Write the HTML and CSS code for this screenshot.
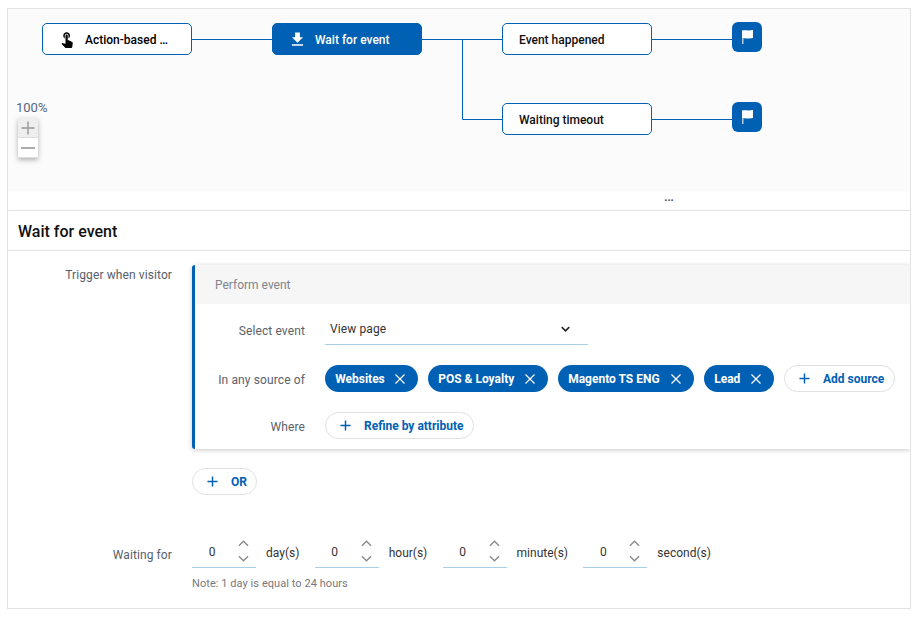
FILE: index.html
```html
<!DOCTYPE html>
<html lang="en">
<head>
  <meta charset="UTF-8" />
  <meta name="viewport" content="width=device-width, initial-scale=1.0"/>
  <title>Wait for event</title>
  <link rel="stylesheet" href="styles.css">
</head>
<body>

  <svg class="sprite" width="0" height="0">
    <symbol id="i-plus" viewBox="0 0 12 12"><path d="M6 0.5v11M0.5 6h11" fill="none" stroke="currentColor" stroke-width="1.6"/></symbol>
    <symbol id="i-close" viewBox="0 0 10 10"><path d="M0.5 0.5l9 9M9.5 0.5l-9 9" fill="none" stroke="currentColor" stroke-width="1.2"/></symbol>
    <symbol id="i-up" viewBox="0 0 12 7"><path d="M1 6l5-5 5 5" fill="none" stroke="currentColor" stroke-width="1.5"/></symbol>
    <symbol id="i-down" viewBox="0 0 12 7"><path d="M1 1l5 5 5-5" fill="none" stroke="currentColor" stroke-width="1.5"/></symbol>
    <symbol id="i-flag" viewBox="0 0 11 14"><path d="M0 0.500C3 -0.300 6 1 11 0v8C6 9 3 7.700 1.500 8.300V8H0z" fill="currentColor"/><rect y="8" width="1.500" height="6" fill="currentColor" opacity="0.7"/></symbol>
  </svg>

  <div class="frame">

    <!-- Flow canvas -->
    <div class="canvas">
      <svg class="edges" width="902" height="181">
        <path d="M184 30.500h80M414 30.500h80M454.500 30.500v80h40M644 30.500h80M644 110.500h80" fill="none" stroke="#0060b4"/>
      </svg>

      <div class="node node-action">
        <svg class="node-icon" viewBox="0 0 24 24"><path d="M9 11.240V7.500C9 6.120 10.120 5 11.500 5S14 6.120 14 7.500v3.740c1.210-.810 2-2.180 2-3.740C16 5.010 13.990 3 11.500 3S7 5.010 7 7.500c0 1.560.790 2.930 2 3.740zm9.840 4.630l-4.540-2.260c-.170-.070-.350-.110-.540-.110H13v-6c0-.830-.670-1.500-1.500-1.500S10 6.670 10 7.500v10.740l-3.430-.720c-.080-.010-.150-.030-.240-.030-.310 0-.590.130-.790.330l-.790.800 4.940 4.940c.270.270.650.440 1.060.440h6.790c.750 0 1.330-.550 1.440-1.280l.750-5.270c.010-.070.020-.140.020-.200 0-.620-.380-1.160-.910-1.380z" fill="currentColor"/></svg>
        <span>Action-based …</span>
      </div>

      <div class="node node-wait">
        <svg class="node-icon" viewBox="0 0 24 24"><path d="M19 9h-4V3H9v6H5l7 7 7-7zM5 18v2h14v-2H5z" fill="currentColor"/></svg>
        <span>Wait for event</span>
      </div>

      <div class="node node-happened"><span>Event happened</span></div>
      <div class="node node-timeout"><span>Waiting timeout</span></div>

      <div class="flag flag-top"><svg width="11" height="14"><use href="#i-flag"/></svg></div>
      <div class="flag flag-bottom"><svg width="11" height="14"><use href="#i-flag"/></svg></div>

      <div class="zoom-level">100%</div>
      <div class="zoom-box">
        <button class="zoom-btn zoom-in"><svg width="14" height="14"><use href="#i-plus"/></svg></button>
        <button class="zoom-btn"><svg class="minus" width="14" height="2"><rect width="14" height="2" fill="currentColor"/></svg></button>
      </div>
    </div>

    <div class="resizer">...</div>

    <h2 class="title">Wait for event</h2>

    <div class="content">
      <div class="row">
        <div class="row-label">Trigger when visitor</div>

        <div class="card">
          <div class="card-head">Perform event</div>
          <div class="card-body">
            <div class="field">
              <label>Select event</label>
              <div class="select">
                <span>View page</span>
                <svg width="9" height="6" viewBox="0 0 12 7"><path d="M1 1l5 5 5-5" fill="none" stroke="#222" stroke-width="2"/></svg>
              </div>
            </div>

            <div class="field">
              <label>In any source of</label>
              <div class="chips">
                <span class="chip chip-websites">Websites <svg width="10" height="10"><use href="#i-close"/></svg></span>
                <span class="chip chip-pos">POS &amp; Loyalty <svg width="10" height="10"><use href="#i-close"/></svg></span>
                <span class="chip chip-magento">Magento TS ENG <svg width="10" height="10"><use href="#i-close"/></svg></span>
                <span class="chip chip-lead">Lead <svg width="10" height="10"><use href="#i-close"/></svg></span>
                <button class="pill pill-add"><svg width="11" height="11"><use href="#i-plus"/></svg>Add source</button>
              </div>
            </div>

            <div class="field">
              <label>Where</label>
              <button class="pill pill-refine"><svg width="11" height="11"><use href="#i-plus"/></svg>Refine by attribute</button>
            </div>
          </div>
        </div>
      </div>

      <button class="pill pill-or"><svg width="11" height="11"><use href="#i-plus"/></svg>OR</button>

      <div class="row row-wait">
        <div class="row-label">Waiting for</div>
        <div>
          <div class="durations">
            <div class="number"><span class="number-value">0</span><span class="spin"><svg width="11" height="7"><use href="#i-up"/></svg><svg width="11" height="7"><use href="#i-down"/></svg></span></div>
            <span class="unit">day(s)</span>
            <div class="number"><span class="number-value">0</span><span class="spin"><svg width="11" height="7"><use href="#i-up"/></svg><svg width="11" height="7"><use href="#i-down"/></svg></span></div>
            <span class="unit">hour(s)</span>
            <div class="number"><span class="number-value">0</span><span class="spin"><svg width="11" height="7"><use href="#i-up"/></svg><svg width="11" height="7"><use href="#i-down"/></svg></span></div>
            <span class="unit">minute(s)</span>
            <div class="number"><span class="number-value">0</span><span class="spin"><svg width="11" height="7"><use href="#i-up"/></svg><svg width="11" height="7"><use href="#i-down"/></svg></span></div>
            <span class="unit">second(s)</span>
          </div>
          <p class="note">Note: 1 day is equal to 24 hours</p>
        </div>
      </div>
    </div>
  </div>

</body>
</html>
```

FILE: styles.css
```css
body {
  font-family: Roboto, 'Liberation Sans', sans-serif;
  font-size: 12px;
  color: #333;
  background: #fff;
  margin: 0;
  padding: 0;
}

button {
  font-family: inherit;
  cursor: pointer;
}

.sprite {
  position: absolute;
}

.frame {
  box-sizing: border-box;
  width: 904px;
  height: 601px;
  margin: 8px 0 0 7px;
  border: 1px solid #e3e3e3;
  overflow: hidden;
}

/* Flow canvas */
.canvas {
  position: relative;
  height: 181px;
  background-color: #fbfbfb;
}

.edges {
  position: absolute;
  left: 0;
  top: 0;
}

.node {
  position: absolute;
  box-sizing: border-box;
  display: flex;
  align-items: center;
  width: 150px;
  height: 32px;
  padding: 2px 0 0 16px;
  border: 1px solid #0060b4;
  border-radius: 5px;
  background-color: #fff;
  color: #111;
  font-weight: 500;
}

.node-icon {
  width: 18px;
  height: 18px;
  margin-top: -2px;
  margin-right: 8px;
}

.node-action {
  left: 34px;
  top: 14px;
  color: #000;
}

.node-action .node-icon {
  margin-left: -1px;
  margin-right: 9px;
}

.node-wait {
  left: 264px;
  top: 14px;
  padding-left: 15px;
  background-color: #0060b4;
  color: #fff;
}

.node-wait .node-icon {
  width: 19px;
  height: 19px;
}

.node-happened {
  left: 494px;
  top: 14px;
}

.node-timeout {
  left: 494px;
  top: 94px;
}

.flag {
  position: absolute;
  left: 724px;
  display: flex;
  align-items: center;
  justify-content: center;
  width: 30px;
  height: 30px;
  border-radius: 6px;
  background-color: #0060b4;
  color: #fff;
}

.flag-top {
  top: 13px;
}

.flag-bottom {
  top: 93px;
}

.zoom-level {
  position: absolute;
  left: 8px;
  top: 91px;
  font-size: 13px;
  color: #56677a;
}

.zoom-box {
  position: absolute;
  left: 10px;
  top: 109px;
  width: 20px;
  box-shadow: 0 2px 5px rgba(0, 0, 0, 0.3);
}

.zoom-btn {
  display: flex;
  align-items: center;
  justify-content: center;
  width: 20px;
  height: 20px;
  padding: 0;
  border: none;
  border-bottom: 1px solid #ddd;
  background-color: #fff;
  color: #a8abae;
}

.zoom-in {
  background-color: #eee;
}

/* Panel */
.resizer {
  box-sizing: border-box;
  height: 21px;
  padding-left: 420px;
  border-bottom: 1px solid #e3e3e3;
  box-shadow: inset 0 1px 2px rgba(0, 0, 0, 0.03);
  text-align: center;
  font-size: 11px;
  font-weight: 700;
  line-height: 15px;
  color: #445;
}

.title {
  box-sizing: border-box;
  height: 40px;
  margin: 0;
  padding-left: 10px;
  border-bottom: 1px solid #e3e3e3;
  font-size: 16px;
  font-weight: 500;
  line-height: 41px;
  color: #111;
}

.content {
  padding-top: 14px;
}

.row {
  display: grid;
  grid-template-columns: 164px 1fr;
  column-gap: 20px;
}

.row-label {
  padding-top: 3px;
  text-align: right;
  letter-spacing: 0.1px;
  color: #56606b;
}

.card {
  border-left: 3px solid #0060b4;
  border-radius: 3px 0 0 3px;
  background-color: #fff;
  box-shadow: 0 1px 5px rgba(0, 0, 0, 0.22);
}

.card-head {
  height: 39px;
  padding-left: 20px;
  background-color: #f6f6f6;
  line-height: 41px;
  color: #808488;
}

.card-body {
  padding: 11px 0 10px;
}

.field {
  display: grid;
  grid-template-columns: 110px 1fr;
  column-gap: 20px;
  align-items: center;
  margin-bottom: 20px;
}

.field:last-child {
  margin-bottom: 0;
}

.field label {
  padding-top: 2px;
  text-align: right;
  letter-spacing: 0.12px;
  color: #5a6169;
}

.select {
  box-sizing: border-box;
  display: flex;
  align-items: center;
  justify-content: space-between;
  width: 263px;
  height: 30px;
  padding: 0 18px 2px 5px;
  border-bottom: 1px solid #a9cfe6;
  letter-spacing: 0.1px;
  color: #333;
}

.chips {
  display: flex;
  gap: 10px;
}

.chip {
  box-sizing: border-box;
  display: flex;
  align-items: center;
  justify-content: space-between;
  height: 27px;
  padding: 0 13px 0 10.2px;
  border-radius: 14px;
  background-color: #0060b4;
  color: #fff;
  font-weight: 700;
  white-space: nowrap;
}

.chip-websites {
  width: 93px;
}

.chip-pos {
  width: 120px;
}

.chip-magento {
  width: 136px;
}

.chip-lead {
  width: 70px;
}

.pill {
  box-sizing: border-box;
  display: inline-flex;
  align-items: center;
  justify-self: start;
  height: 27px;
  padding: 0 9.500px 0 13.500px;
  border: 1px solid #e0e0e0;
  border-radius: 14px;
  background-color: #fff;
  color: #0060b4;
  font-size: 12px;
  font-weight: 700;
  white-space: nowrap;
}

.pill svg {
  margin-right: 13.500px;
}

.pill-or {
  display: flex;
  margin: 19px 0 0 184px;
}

.row-wait {
  margin-top: 42px;
}

.row-wait .row-label {
  padding-top: 11px;
}

.durations {
  display: flex;
  align-items: center;
  gap: 10px;
}

.unit {
  margin-right: 5.300px;
}

.number {
  box-sizing: border-box;
  display: flex;
  align-items: center;
  width: 64px;
  height: 31px;
  border-bottom: 1px solid #a9cfe6;
}

.number-value {
  width: 40px;
  text-align: center;
}

.spin {
  display: flex;
  flex-direction: column;
  gap: 8px;
  margin: -3px 0 0 6px;
  color: #8a8a8a;
}

.spin svg {
  display: block;
}

.note {
  margin: 9px 0 0;
  font-size: 11px;
  letter-spacing: 0.06px;
  color: #77797c;
}
```
